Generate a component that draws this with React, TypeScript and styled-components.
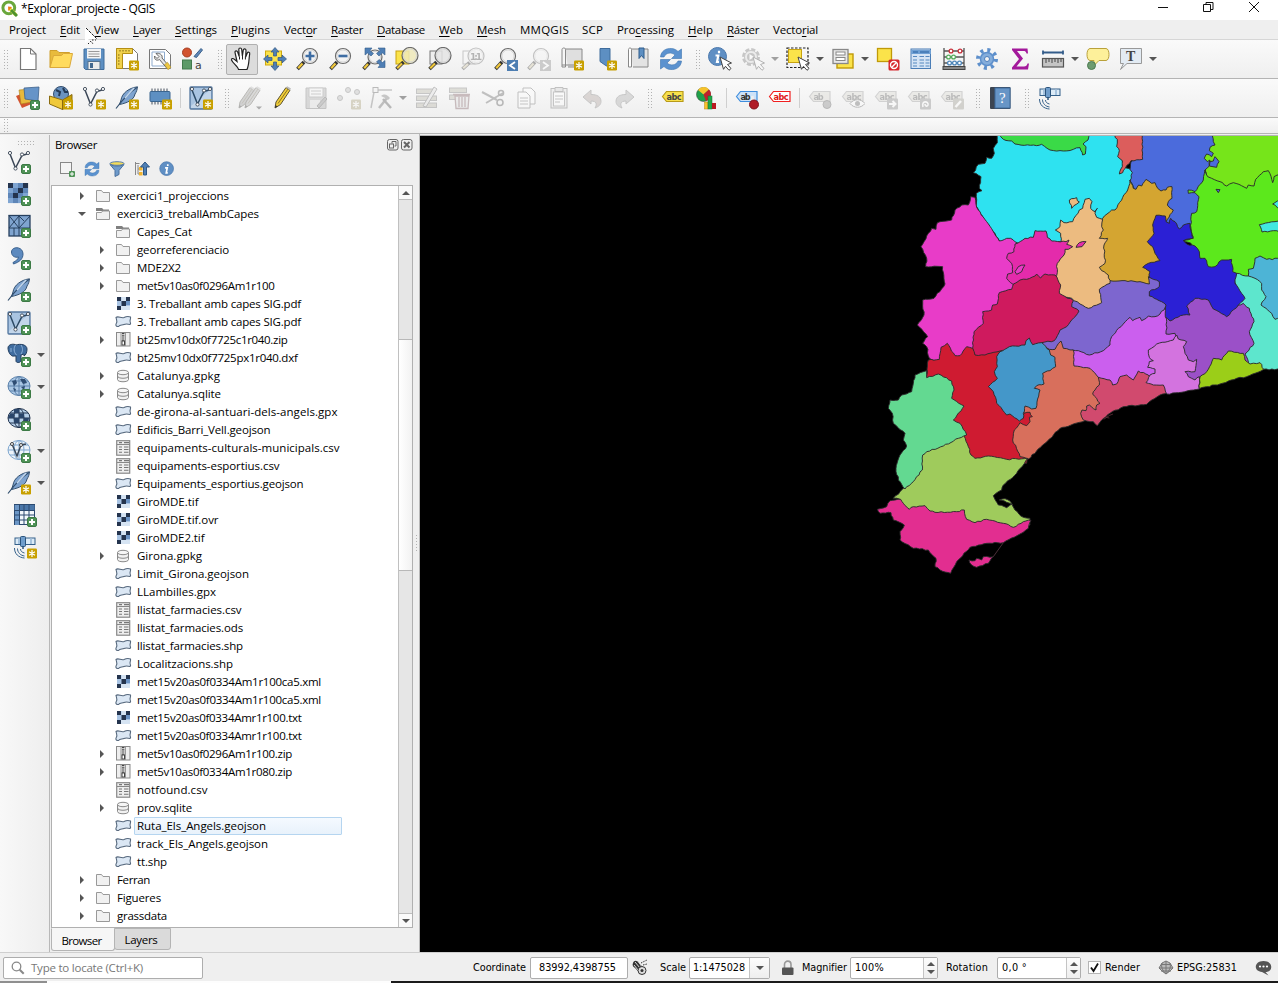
import React, { ReactNode, useLayoutEffect, useRef, useState } from "react";
import styled, { createGlobalStyle } from "styled-components";

const GlobalStyle = createGlobalStyle`
  * { box-sizing: border-box; }
  html, body { margin: 0; padding: 0; background: #efefef; overflow: hidden; }
  body { font-family: "Open Sans", "Noto Sans", sans-serif; font-size: 11.5px; color: #000; }
  svg { display: block; flex: none; }
`;

/* ---------- text with a known advance width ---------- */

const FitSpan = styled.span`
  display: inline-block;
  white-space: pre;
  flex: none;
`;

function Fit({ w, children }: { w: number; children: ReactNode }) {
  const ref = useRef<HTMLSpanElement>(null);
  const [spacing, setSpacing] = useState(0);
  useLayoutEffect(() => {
    const el = ref.current;
    if (!el) return;
    const n = (el.textContent || "").length || 1;
    setSpacing((s) => s + (w - el.getBoundingClientRect().width) / n);
  }, [w]);
  return (
    <FitSpan ref={ref} style={{ letterSpacing: spacing }}>
      {children}
    </FitSpan>
  );
}

/* ---------- frame ---------- */

const Window = styled.div`
  width: 1278px;
  height: 983px;
  display: flex;
  flex-direction: column;
  background: #efefef;
  overflow: hidden;
  position: relative;
`;

const TitleBar = styled.div`
  height: 20px;
  flex: none;
  background: #fff;
  display: flex;
  align-items: center;
  padding-bottom: 3px;
`;

const TitleText = styled.div`
  margin-left: 3px;
  flex: 1;
  font-size: 12px;
`;

const MenuBar = styled.div`
  height: 20px;
  flex: none;
  display: flex;
  align-items: center;
  padding-left: 9px;
  background: #efefef;
  border-bottom: 1px solid #d6d6d6;
`;

const MenuItem = styled.div<{ $w: number }>`
  width: ${(p) => p.$w}px;
  flex: none;
  line-height: 18px;
`;

const Mnemonic = styled.span`
  text-decoration: underline;
  text-underline-offset: 2px;
`;

const ToolBar = styled.div<{ $h: number }>`
  height: ${(p) => p.$h}px;
  flex: none;
  display: flex;
  align-items: center;
  background: linear-gradient(#fafafa, #efefef);
  border-bottom: 1px solid #b4b4b4;
  padding-left: 3px;
`;

const Slot = styled.div<{ $w?: number; $off?: boolean }>`
  width: ${(p) => p.$w ?? 33}px;
  height: 100%;
  flex: none;
  display: flex;
  align-items: center;
  justify-content: center;
  opacity: ${(p) => (p.$off ? 0.37 : 1)};
  filter: ${(p) => (p.$off ? "grayscale(.75)" : "none")};
`;

const DropSlot = styled.div`
  width: 12px;
  flex: none;
  display: flex;
  justify-content: flex-start;
  padding-left: 1px;
`;

const Pressed = styled.div`
  width: 32px;
  height: 31px;
  border: 1px solid #b0b0b0;
  border-radius: 2px;
  background: #dcdcdc;
  display: flex;
  align-items: center;
  justify-content: center;
`;

const HandleBox = styled.div<{ $w: number; $pad: number }>`
  width: ${(p) => p.$w}px;
  padding-right: ${(p) => p.$pad}px;
  flex: none;
  display: flex;
  justify-content: flex-end;
`;

const Rule = styled.div<{ $w: number }>`
  width: ${(p) => p.$w}px;
  height: 20px;
  flex: none;
  background: linear-gradient(#cfcfcf, #cfcfcf) center / 1px 100% no-repeat;
`;

const Dots = styled.div<{ $w: number; $h: number }>`
  width: ${(p) => p.$w}px;
  height: ${(p) => p.$h}px;
  flex: none;
  background-image: linear-gradient(90deg, #f3f3f3 0 0), linear-gradient(#f3f3f3 0 0), linear-gradient(#b0b0b0 0 0);
  background-size: 3px 100%, 100% 3px, 100% 100%;
  background: conic-gradient(from 270deg at 1px 1px, #b2b2b2 90deg, transparent 0) 0 0 / 3px 3px;
`;

const Handle = ({ w = 16, pad = 4, h = 19 }: { w?: number; pad?: number; h?: number }) => (
  <HandleBox $w={w} $pad={pad}>
    <Dots $w={4} $h={h} />
  </HandleBox>
);

const Arrow = styled.i<{ $off?: boolean }>`
  display: block;
  border: 4px solid transparent;
  border-top-color: ${(p) => (p.$off ? "#a0a0a0" : "#555")};
  border-bottom: 0;
`;

const Body = styled.div`
  flex: 1;
  min-height: 0;
  display: flex;
`;

const SideBar = styled.div`
  width: 50px;
  flex: none;
  border-right: 1px solid #b8b8b8;
  background: linear-gradient(90deg, #f8f8f8, #eeeeee);
  display: flex;
  flex-direction: column;
  padding-top: 6px;
  margin-top: 1px;
`;

const SideHandle = styled.div`
  padding-left: 18px;
  height: 5px;
`;

const SideRow = styled.div<{ $x: number }>`
  height: 32.1px;
  flex: none;
  padding-left: ${(p) => p.$x}px;
  display: flex;
  align-items: center;
`;

const SideArrow = styled(Arrow)`
  margin-left: 6px;
`;

const Dock = styled.div`
  width: 364px;
  flex: none;
  display: flex;
  flex-direction: column;
  padding-left: 1px;
`;

const DockTitle = styled.div`
  height: 21px;
  flex: none;
  display: flex;
  align-items: center;
  justify-content: space-between;
  padding: 0 1px 0 4px;
`;

const DockButtons = styled.div`
  display: flex;
  gap: 2px;
`;

const DockTools = styled.div`
  height: 30px;
  flex: none;
  display: flex;
  align-items: center;
  gap: 9px;
  padding: 0 0 2px 8px;
`;

const TreeBox = styled.div`
  height: 743px;
  width: 362px;
  flex: none;
  display: flex;
  background: #fff;
  border: 1px solid #b0b0b0;
`;

const Tree = styled.div`
  flex: 1;
  padding-top: 1px;
  overflow: hidden;
`;

const TreeRow = styled.div<{ $depth: number }>`
  height: 18px;
  display: flex;
  align-items: center;
  padding-left: ${(p) => 24 + p.$depth * 20}px;
`;

const Expander = styled.div`
  width: 12px;
  flex: none;
  display: flex;
  justify-content: center;
`;

const TreeIcon = styled.div`
  width: 18px;
  margin-left: 6px;
  flex: none;
  display: flex;
  justify-content: center;
  padding-bottom: 1px;
`;

const TreeLabel = styled.div<{ $sel?: boolean }>`
  height: 18px;
  line-height: ${(p) => (p.$sel ? 15 : 17)}px;
  margin-left: 2px;
  padding-left: ${(p) => (p.$sel ? 2 : 3)}px;
  width: ${(p) => (p.$sel ? "208px" : "auto")};
  border: ${(p) => (p.$sel ? "1px solid #b5d5f0" : "0")};
  border-radius: 1px;
  background: ${(p) => (p.$sel ? "linear-gradient(#f5faff, #e8f2fb)" : "none")};
`;

const ScrollBar = styled.div`
  width: 14px;
  flex: none;
  display: flex;
  flex-direction: column;
  border-left: 1px solid #c0c0c0;
  background: #e6e6e6;
`;

const ScrollButton = styled.div`
  height: 13px;
  flex: none;
  background: #fafafa;
  display: flex;
  align-items: center;
  justify-content: center;
`;

const Trough = styled.div<{ $h: number; $end?: boolean }>`
  height: ${(p) => p.$h}px;
  flex: none;
  border-top: ${(p) => (p.$end ? "0" : "1px solid #bdbdbd")};
  border-bottom: ${(p) => (p.$end ? "1px solid #bdbdbd" : "0")};
`;

const Thumb = styled.div`
  height: 232px;
  flex: none;
  border-top: 1px solid #b8b8b8;
  border-bottom: 1px solid #b8b8b8;
  background: linear-gradient(90deg, #fff, #f2f2f2);
`;

const Tabs = styled.div`
  display: flex;
  align-items: flex-start;
  height: 23px;
  flex: none;
`;

const Tab = styled.div<{ $w: number; $on?: boolean }>`
  width: ${(p) => p.$w}px;
  height: ${(p) => (p.$on ? 23 : 22)}px;
  padding-top: ${(p) => (p.$on ? 2 : 1)}px;
  padding-right: 3px;
  border: 1px solid #b4b4b4;
  border-top-color: ${(p) => (p.$on ? "transparent" : "#b4b4b4")};
  border-radius: 0 0 3px 3px;
  margin-left: ${(p) => (p.$on ? 0 : -1)}px;
  background: ${(p) => (p.$on ? "#f6f6f6" : "#dadada")};
  display: flex;
  align-items: center;
  justify-content: center;
`;

const Splitter = styled.div`
  width: 6px;
  flex: none;
  display: flex;
  align-items: center;
  border-right: 1px solid #b8b8b8;
  justify-content: center;
`;

const MapPane = styled.div`
  flex: 1;
  background: #000;
  border-top: 1px solid #b4b4b4;
  margin-top: 1px;
`;

const StatusBar = styled.div`
  height: 29px;
  flex: none;
  display: flex;
  align-items: center;
  padding: 1px 0 0 3px;
  border-top: 1px solid #cfcfcf;
  font-family: "DejaVu Sans Condensed", "DejaVu Sans", "Open Sans", sans-serif;
  font-size: 10.8px;
`;

const Field = styled.div<{ $w: number; $pl?: number }>`
  width: ${(p) => p.$w}px;
  height: 22px;
  flex: none;
  display: flex;
  align-items: center;
  padding-left: ${(p) => p.$pl ?? 4}px;
  border: 1px solid #adadad;
  border-radius: 2px;
  background: #fff;
`;

const FieldButton = styled.div<{ $w: number }>`
  width: ${(p) => p.$w}px;
  height: 20px;
  margin-left: auto;
  border-left: 1px solid #c4c4c4;
  background: linear-gradient(#fdfdfd, #eee);
  display: flex;
  flex-direction: column;
  align-items: center;
  justify-content: center;
  gap: 4px;
`;

const UpArrow = styled.i`
  display: block;
  border: 4px solid transparent;
  border-bottom-color: #555;
  border-top: 0;
`;

const Hint = styled.span`
  color: #777;
  font-family: "Open Sans", sans-serif;
  font-size: 11.5px;
  margin-left: 6px;
`;

const Gap = styled.div<{ $w: number }>`
  width: ${(p) => p.$w}px;
  flex: none;
`;

const Check = styled.div`
  width: 13px;
  height: 13px;
  background: #fff;
  border: 1px solid #b5b5b5;
  flex: none;
`;

const Taskbar = styled.div`
  height: 2px;
  flex: none;
  background: linear-gradient(90deg, #8f8f8f 47px, #fdfdfd 47px, #fdfdfd 391px, #1b1b1b 391px);
`;

const Pointer = styled.div`
  position: absolute;
  left: 84px;
  top: 27px;
`;

/* ---------- icons ---------- */

const Svg = ({ s = 24, children, box = 24 }: { s?: number; box?: number; children: ReactNode }) => (
  <svg width={s} height={s} viewBox={`0 0 ${box} ${box}`} fill="none">
    {children}
  </svg>
);

const PlusBadge = () => (
  <g>
    <rect x="14.500" y="14.500" width="9" height="9" rx="1.500" fill="#4f9357" stroke="#3c7a45" />
    <path d="M19 16v6M16 19h6" stroke="#fff" strokeWidth="2" />
  </g>
);

const StarBadge = () => (
  <g>
    <rect x="14" y="13.500" width="10" height="10" rx="1.200" fill="#c8a000" />
    <path d="M19 15v7M16 16.700l6 3.600M22 16.700l-6 3.600" stroke="#fff" strokeWidth="1.200" />
  </g>
);

const Lens = ({ cx = 14, cy = 9, r = 7.5, fill = "#f2f2f2" }: { cx?: number; cy?: number; r?: number; fill?: string }) => (
  <g>
    <path d={`M${cx - r + 1.5} ${cy + r - 1.5}L1.5 22`} stroke="#333" strokeWidth="3.600" />
    <path d={`M${cx - r} ${cy + r}L2.2 21.3`} stroke="#f0c83c" strokeWidth="2.200" />
    <circle cx={cx} cy={cy} r={r} fill={fill} fillOpacity=".85" stroke="#6b6b6b" strokeWidth="1.200" />
    <circle cx={cx} cy={cy} r={r - 1.4} stroke="#d5d5d5" strokeWidth="1" />
  </g>
);

const VLine = ({ light }: { light?: boolean }) => (
  <g>
    <path d="M3 4l5.500 14L15 5.500 20 4" stroke={light ? "#2c4a66" : "#3b4757"} strokeWidth="1.500" />
    {[[3, 3], [15, 4.500], [21, 3], [8.500, 18.500]].map(([x, y]) => (
      <circle key={`${x}`} cx={x} cy={y} r="1.600" fill="#fff" stroke="#4a5563" />
    ))}
  </g>
);

const Feather = () => (
  <g>
    <path d="M22.500 .8C14 2 7 7 6 14l-1.500 4.500C12 17 19 14 20 8c1.500-2 2.300-5 2.500-7.200z" fill="#7ea3cf" stroke="#33506f" />
    <path d="M22 1.500C15 6 8 13 1 22.500" stroke="#33506f" strokeWidth="1.200" />
    <path d="M19 2l-9 10" stroke="#c4d8ee" strokeWidth="1.500" />
  </g>
);

const Refresh = () => (
  <g fill="#5b92cf" stroke="#3d73ae" strokeWidth=".6">
    <path d="M1.500 10C2 4 7 1 12.500 1.500c3 .2 5 1.500 6.500 3L22.500 2v9.500h-10l3.500-3.500C12.500 5 7 5.500 5 10z" />
    <path d="M22.500 14C22 20 17 23 11.500 22.500c-3-.2-5-1.500-6.500-3L1.500 22v-9.500h10L8 16c3.500 3 9 2.500 11-2z" />
  </g>
);

const Info = () => (
  <g>
    <circle cx="10" cy="10" r="9" fill="#5f8fc4" stroke="#4a78ad" />
    <path d="M11.500 4.200v2.500M8 9h2.800l-1.300 6.500h2" stroke="#fff" strokeWidth="2.200" />
  </g>
);

const CursorArrow = () => <path d="M12 10l11.500 6-4 1.500 3.500 4-2 1.800-3.500-4-2 3z" fill="#fff" stroke="#444" />;

const Tag = ({ fill, line, ink, t = "abc" }: { fill: string; line: string; ink: string; t?: string }) => (
  <g>
    <path d="M1.500 10.500l4-5h16.500v10H5.500z" fill={fill} stroke={line} strokeWidth="1.200" />
    <text x="5.500" y="13.500" fontSize="8.200" fontWeight="bold" fontFamily="DejaVu Sans, sans-serif" fill={ink} textLength={t.length * 5}>
      {t}
    </text>
  </g>
);

const Globe = ({ fill = "#c9dcf0", ink = "#5c82ab" }: { fill?: string; ink?: string }) => (
  <g stroke={ink}>
    <ellipse cx="12" cy="11" rx="11" ry="9.500" fill={fill} />
    <ellipse cx="12" cy="11" rx="5" ry="9.500" />
    <path d="M1 11h22M12 1.500v19M3 6h18M3 16h18" />
  </g>
);

const Satellite = () => (
  <g>
    <rect x="2" y="3" width="20" height="6.500" fill="#dcebf7" stroke="#34608a" />
    <path d="M6 3.500v5.500M18 3.500v5.500" stroke="#a6c3de" strokeWidth="2" />
    <rect x="7.500" y="1.500" width="5" height="10" rx="1" fill="#6f9dcb" stroke="#2c547c" />
    <path d="M10 11.500v2.500" stroke="#2c547c" strokeWidth="1.500" />
    <path d="M7.500 14c0 2 1.500 3.500 4 4M4.500 13.500c0 4 3 7 7 7.500M1.500 13c0 6 4 9.500 10 10" stroke="#34608a" />
  </g>
);

const Pencil = ({ fill = "#f2cf3a" }: { fill?: string }) => (
  <g>
    <path d="M5 16L15 1.500l4 2.700L9.500 18.500 4 22z" fill={fill} stroke="#5c5230" />
    <path d="M7 17.500L17 3" stroke="#8a7422" />
    <path d="M15 1.500l4 2.700 1-1.700-3.800-2.200z" fill="#bbb" />
    <path d="M4 22l.5-3 2 1.500z" fill="#333" />
  </g>
);

const Checker = () => (
  <g>
    {["2132", "1323", "3231", "1311"].map((row, j) =>
      row.split("").map((c, i) => (
        <rect key={`${i}-${j}`} x={1 + i * 5} y={1 + j * 5} width="5.100" height="5.100" fill={["", "#7fa5d2", "#24344e", "#5e86b8"][+c]} />
      ))
    )}
  </g>
);

const VBox = () => (
  <g>
    <rect x="1" y="1" width="22" height="22" rx="1" fill="#a9c4e1" stroke="#54779f" strokeWidth="1.300" />
    <path d="M2 20L22 3v19H2z" fill="#c3d6ea" />
    <VLine light />
  </g>
);

const Hand = (
  <Svg>
    <path d="M8.500 22.500c-.5-3-5.500-6-7-9.500-.4-1.600 1.500-2 2.800-.8L7 14.500 5 5.500c-.3-2 2-2.300 2.600-.6l1.600 4.600-.4-7c0-2 2.600-2 2.900 0l.7 6.500.9-6c.3-1.800 2.800-1.500 2.700.4l-.3 6.600 1.600-4c.7-1.500 2.700-.8 2.400.8-1 5-.3 10.500-2.700 15.700z" fill="#fff" stroke="#222" strokeWidth="1.200" />
    <path d="M9.500 9.500v3M12.500 9v3.500M15.400 9.500V12.500" stroke="#222" />
  </Svg>
);

const icons: Record<string, ReactNode> = {
  neu: <Svg><path d="M4.500 1.500h10l5.500 5.500v15.500h-15.500z" fill="#fff" stroke="#777" strokeWidth="1.200" /><path d="M14.500 1.500v5.500h5.500" stroke="#777" /></Svg>,
  open: <Svg><path d="M1 20.500V3.500h7l2 2h10.500v4" fill="#e8bb3c" stroke="#cf9f2b" /><path d="M1 20.500L4.500 8.500h8l2-2h9L20.500 20.500z" fill="#ffdb5e" stroke="#dba93a" /></Svg>,
  save: <Svg><path d="M2 2h20v20.500H3.500L2 21z" fill="#5d8fc2" stroke="#3f6c9c" /><path d="M5 2h14v9.500H5z" fill="#f4f4f4" /><path d="M6.500 4.500h11M6.500 7h11M6.500 9.500h11" stroke="#9a9a9a" /><rect x="6" y="14.500" width="12" height="8" fill="#ececec" stroke="#55728f" /><rect x="8" y="16" width="3" height="5" fill="#44698f" /></Svg>,
  layout: <Svg><path d="M1.500 1.500h16l5 5v15h-21z" fill="#fff" stroke="#777" /><path d="M1.500 1.500h16v5h-10v15h-6z" fill="#f0d14c" stroke="#b58f14" /><path d="M5 3v1.500M8 3v1.500M11 3v1.500M14 3v1.500M3 8h1.500M3 11h1.500M3 14h1.500M3 17h1.500" stroke="#7c6512" /><StarBadge /></Svg>,
  manager: <Svg><path d="M1.500 2.500h16l5 5v14h-21z" fill="#fff" stroke="#777" /><path d="M4 5h12.500v14H4z" stroke="#8eabce" /><path d="M8 6.500l3 3-2 2-2.500-2.500C6 13 9 14 11.500 12.500L19 21.500l2.500-2-7.500-8.500C15 8 11.500 5.500 8 6.500z" fill="#e6e6e6" stroke="#666" /><path d="M16.500 17.500l3-2.200 3.500 5-3 2.500z" fill="#edc742" stroke="#a98a2a" strokeWidth=".5" /></Svg>,
  style: <Svg><circle cx="6" cy="5.500" r="4.500" fill="#d2532f" stroke="#a63e22" /><path d="M13 9.500L20 1.500l1.500 1.500-6 7.500z" fill="#5d87b8" stroke="#3d628c" /><rect x="1.500" y="13" width="9" height="9" fill="#5d9a68" stroke="#437a4d" /><text x="14" y="21.500" fontSize="11" fontFamily="DejaVu Sans, sans-serif" fill="#444">a</text></Svg>,
  pan: <Svg><rect x="2.500" y="4" width="16" height="14" fill="#fbe34a" stroke="#cfa90e" /><g fill="#4f7fb5" stroke="#33587f" strokeWidth=".7"><path d="M12 .5l4 4.500h-2.500v4h-3V5H8zM12 23.500l4-4.500h-2.500v-4h-3v4H8zM.5 12L5 8v2.500h4v3H5V16zM23.500 12L19 8v2.500h-4v3h4V16z" /></g></Svg>,
  zin: <Svg><Lens /><path d="M14 4.500v9M9.500 9h9" stroke="#3e6da3" strokeWidth="2.600" /></Svg>,
  zout: <Svg><Lens /><path d="M9.500 9h9" stroke="#3e6da3" strokeWidth="2.600" /></Svg>,
  zfull: <Svg><Lens cx={13} cy={10} r={7} /><g fill="#4f7fb5" stroke="#365e8a" strokeWidth=".6"><path d="M3 1h7L8 3.500l3.500 3-2.500 2.500-3.500-3L3 8zM23 1h-7l2 2.500-3.500 3L17 9l3.500-3L23 8zM23 20.500h-7l2-2.500-3.500-3 2.500-2.500 3.500 3 2.500-2z" /></g></Svg>,
  zsel: <Svg><rect x="1" y="4" width="13" height="13" fill="#fbe34a" stroke="#c9a40f" /><Lens fill="#efe9b8" cx={15} cy={8.500} r={8} /></Svg>,
  zlay: <Svg><rect x="2" y="4" width="12" height="13" fill="#eee" stroke="#777" /><Lens fill="#e4e4e4" cx={15} cy={8.500} r={8} /></Svg>,
  znat: <Svg><rect x="2" y="4" width="12" height="13" stroke="#777" /><Lens cx={15} cy={9} r={8} /><text x="9" y="12.500" fontSize="9" fontWeight="bold" fontFamily="DejaVu Sans, sans-serif" textLength="12" fill="#444">1:1</text></Svg>,
  zlast: <Svg><Lens /><rect x="13" y="13" width="11" height="11" fill="#4d7eb2" /><path d="M21 15l-5 3.500 5 3.500" stroke="#fff" strokeWidth="1.800" /></Svg>,
  znext: <Svg><Lens /><rect x="13" y="13" width="11" height="11" fill="#888" /><path d="M16 15l5 3.500-5 3.500" stroke="#fff" strokeWidth="1.800" /></Svg>,
  map3: <Svg><path d="M5 2h17v18H8" fill="#dfdfdf" stroke="#888" /><path d="M2 2.500c0-2 3.500-2 3.500 0V20H2zM2 18h15" fill="#f6f6f6" stroke="#888" /><StarBadge /></Svg>,
  bmNew: <Svg><path d="M7 1.500h10V21l-5-3-5-3.500z" fill="#5d8fc2" stroke="#3f6c9c" /><StarBadge /></Svg>,
  bm: <Svg><path d="M4 2h18v18H7" fill="#e3e3e3" stroke="#888" /><path d="M2.500 2.500c0-2 3-2 3 0V20h-3z" fill="#fff" stroke="#888" /><path d="M13 1h5v10.500l-2.500-3-2.500 3z" fill="#5d8fc2" stroke="#2f5c8c" /></Svg>,
  refresh: <Svg><Refresh /></Svg>,
  identify: <Svg><g transform="translate(-.5 -.5)"><Info /></g><CursorArrow /></Svg>,
  action: <Svg><circle cx="10" cy="10" r="7.500" stroke="#777" strokeWidth="3" strokeDasharray="4 1.890" /><circle cx="10" cy="10" r="6.500" fill="#ddd" stroke="#777" /><circle cx="10" cy="10" r="4" fill="#777" /><path d="M8.500 7l4.500 3-4.500 3z" fill="#fff" /><CursorArrow /></Svg>,
  select: <Svg><rect x="1" y="1" width="21" height="19.500" stroke="#222" strokeDasharray="2.500 1.500" strokeWidth="1.200" /><rect x="2.500" y="2.500" width="13" height="13" fill="#fbe34a" stroke="#c9a40f" /><CursorArrow /></Svg>,
  form: <Svg><rect x="6" y="7" width="16" height="14" fill="#fbe34a" stroke="#c09a08" strokeWidth="1.400" /><rect x="2" y="2.500" width="15" height="14" fill="#e8e8e8" stroke="#888" strokeWidth="1.300" /><rect x="5" y="5" width="9" height="3" fill="#fff" stroke="#888" /><rect x="5" y="10.500" width="9" height="3" fill="#fff" stroke="#888" /></Svg>,
  desel: <Svg><rect x="1.500" y="1.500" width="14" height="13" fill="#fbe34a" stroke="#c09a08" strokeWidth="1.300" /><rect x="12.500" y="12.500" width="11" height="11" rx="1.500" fill="#d6262c" /><circle cx="18" cy="18" r="3.500" stroke="#fff" strokeWidth="1.400" /><path d="M15.500 20.500l5-5" stroke="#fff" strokeWidth="1.400" /></Svg>,
  table: <Svg><rect x="2" y="2" width="19.500" height="19.500" fill="#d5e4f5" stroke="#4a7db6" /><path d="M2 5h20" stroke="#6fa0d4" strokeWidth="4" /><path d="M4 5h5M11 5h9" stroke="#3f76b2" strokeWidth="1.500" /><path d="M4 9.500h4M10.500 9.500h4.500M16.500 9.500h4M4 13h4M10.500 13h4.500M16.500 13h4M4 16h4M10.500 16h4.500M16.500 16h4M4 19h4M10.500 19h4.500M16.500 19h4" stroke="#5588c0" strokeWidth="1.200" /></Svg>,
  abacus: <Svg><path d="M2 1v19M22 1v19M2 4h20M2 10h20M2 16h20" stroke="#555" strokeWidth="1.300" /><rect x="1" y="19.500" width="22" height="3" fill="#888" stroke="#444" /><g fill="#fff" strokeWidth="1.300"><g stroke="#c8323c"><circle cx="9" cy="4" r="1.900" /><circle cx="18" cy="4" r="1.900" /></g><g stroke="#54ab5c"><circle cx="6.500" cy="10" r="1.900" /><circle cx="11.500" cy="10" r="1.900" /></g><g stroke="#4d86ba"><circle cx="7.500" cy="16" r="1.900" /><circle cx="12.500" cy="16" r="1.900" /><circle cx="17.500" cy="16" r="1.900" /></g></g></Svg>,
  gear: <Svg><circle cx="12" cy="12" r="9" stroke="#5d8fcb" strokeWidth="4" strokeDasharray="3 4.070" /><circle cx="12" cy="12" r="6.500" fill="#84addb" stroke="#5d8fcb" strokeWidth="1.500" /><circle cx="12" cy="12" r="2.500" fill="#f3f3f3" stroke="#4d7fbd" /></Svg>,
  sigma: <Svg><path d="M4 1.500h15.500l.5 5h-1.500c-.5-2-1.500-2.500-3-2.500H9l6 7.500-6.500 8H16c2 0 3-1 3.500-3H21l-1 6H4v-2l7-8.500L4 3z" fill="#a3199b" /></Svg>,
  ruler: <Svg><path d="M2 5.500h20M2 3.500v4M22 3.500v4" stroke="#335c8a" strokeWidth="1.800" /><rect x="1.500" y="11.500" width="21" height="8.500" fill="#c4c4c4" stroke="#555" strokeWidth="1.200" /><path d="M5 12v4M8 12v3M11 12v4M14 12v3M17 12v4M20 12v3" stroke="#444" /></Svg>,
  tip: <Svg><path d="M4 1.500h16c4 0 4 12 0 12h-7l-6 6 1-6H4C0 13.500 0 1.500 4 1.500z" fill="#fdf09a" stroke="#b9a13a" /><circle cx="5.500" cy="18.500" r="4" fill="#6d9b70" stroke="#4b7a50" /></Svg>,
  text: <Svg><path d="M1.500 1.500h21v15H8l-6.500 6 3-6h-3z" fill="#e3ebf3" stroke="#999" /><text x="7" y="13.500" fontSize="14" fontFamily="Liberation Serif, serif" fontWeight="bold" fill="#444">T</text></Svg>,
  layers: <Svg><path d="M0 10L10 6l8 11-12 5z" fill="#d2532f" /><path d="M3 4l11-1 2 13-11 2z" fill="#e9b93b" stroke="#a98120" strokeWidth=".6" /><path d="M8 2l15-1-1 14-13-2z" fill="#6694c8" stroke="#3d628c" strokeWidth=".8" /><PlusBadge /></Svg>,
  gpkg: <Svg><circle cx="12" cy="8" r="7.500" fill="#6a93c1" stroke="#334d6e" /><path d="M7 4l4 2-1 4M14 2l2 4 3 0" stroke="#243b59" strokeWidth="2" /><path d="M.5 10l13 4v9.500L.5 18z" fill="#f0c93a" stroke="#8b6c10" /><path d="M13.500 14L23 8.500V18l-9.500 5.500z" fill="#c8a000" stroke="#8b6c10" /><StarBadge /></Svg>,
  vnew: <Svg><VLine /><StarBadge /></Svg>,
  fnew: <Svg><Feather /><StarBadge /></Svg>,
  chip: <Svg><path d="M4 2.500v16M7 2.500v16M10 2.500v16M13 2.500v16M16 2.500v16M19 2.500v16" stroke="#444f5c" /><rect x="2" y="5.500" width="20" height="10" rx="1" fill="#5d8fc2" stroke="#3b658f" /><StarBadge /></Svg>,
  vbox: <Svg><VBox /><StarBadge /></Svg>,
  pencils: <Svg><g transform="translate(-3 0)"><Pencil fill="#999" /></g><g transform="translate(3 0)"><Pencil fill="#aaa" /></g><path d="M18 20.500h6l-3 3z" fill="#333" /></Svg>,
  pencil: <Svg><Pencil /></Svg>,
  savee: <Svg><path d="M2 2h20v20.500H2z" fill="#aaa" stroke="#777" /><path d="M5 2h14v9H5z" fill="#f4f4f4" stroke="#888" /><path d="M7 5h10M7 8h10" stroke="#888" /><rect x="6" y="14" width="10" height="8" fill="#ddd" /><path d="M13 20l8-9 2 2-8 9z" fill="#888" stroke="#555" /></Svg>,
  points: <Svg><g fill="#bbb" stroke="#777"><circle cx="3" cy="12" r="2.500" /><circle cx="11" cy="4" r="2.500" /><circle cx="20" cy="6" r="2.500" /></g><StarBadge /></Svg>,
  vertex: <Svg><path d="M5 4h17M4 6L1 22" stroke="#777" strokeWidth="1.500" /><rect x="3" y="1.500" width="5" height="5" fill="#eee" stroke="#555" /><path d="M9 22l8-10" stroke="#666" strokeWidth="2.500" /><path d="M11 10c4-3 6-1 9 2l-2 2-3-2z" fill="#777" /><path d="M13 13l8 9" stroke="#555" strokeWidth="2.500" /></Svg>,
  multi: <Svg><g fill="#bdb67a" stroke="#777"><rect x="1.500" y="3" width="18" height="4.500" /><rect x="1.500" y="10" width="20" height="4.500" /><rect x="1.500" y="17" width="20" height="4.500" /></g><path d="M8 20L19 1l3 2-11 18z" fill="#ddd" stroke="#666" /></Svg>,
  trash: <Svg><g fill="#bdb67a" stroke="#777"><rect x="1.500" y="2" width="17" height="4.500" /><rect x="1.500" y="9" width="6" height="4.500" /></g><path d="M5 8.500h17M7 10h14l-1 12.500H8zM11 11v10M14 11v10M17 11v10" fill="#ddd" stroke="#c45" strokeWidth="1.300" /></Svg>,
  cut: <Svg><path d="M1 6l15 8M5 17L22 7" stroke="#666" strokeWidth="2" /><circle cx="19" cy="16.500" r="3" stroke="#555" strokeWidth="1.600" /><circle cx="20" cy="7" r="2.500" stroke="#555" strokeWidth="1.600" /></Svg>,
  copy: <Svg><path d="M9 2h8l4 4v12H9z" fill="#fff" stroke="#666" /><path d="M4 6h8l4 4v12H4z" fill="#fff" stroke="#666" /><path d="M6 12h8M6 15h8M6 18h8" stroke="#777" /></Svg>,
  paste: <Svg><rect x="4" y="2.500" width="16" height="19.500" fill="#e2e2e2" stroke="#666" /><rect x="6.500" y="6" width="11" height="14" fill="#fff" stroke="#777" /><path d="M8 1.500h8v4H8z" fill="#ccc" stroke="#666" /><path d="M8 10h8M8 13h8M8 16h5" stroke="#777" /></Svg>,
  undo: <Svg><path d="M3 11l8-7v4.500c6 0 10 2 10 7 0 3-2 5-6 6.500 2-3.500 2-7-4-7V18z" fill="#c98" stroke="#777" /></Svg>,
  redo: <Svg><path d="M21 11l-8-7v4.500c-6 0-10 2-10 7 0 3 2 5 6 6.500-2-3.500-2-7 4-7V18z" fill="#aaa" stroke="#777" /></Svg>,
  abcY: <Svg><Tag fill="#f8e04c" line="#b89a18" ink="#444" /></Svg>,
  diagram: <Svg><circle cx="9.500" cy="8.500" r="7" fill="#1fa04a" stroke="#333" strokeWidth=".5" /><path d="M9.500 8.500L4 4a7 7 0 0 1 11-.5z" fill="#f6c22c" /><path d="M9.500 8.500L15 3.500a7 7 0 0 1-3 11.500z" fill="#c0202c" /><rect x="10.500" y="16" width="3.500" height="7" fill="#f6c22c" stroke="#b88a10" strokeWidth=".5" /><rect x="14" y="10" width="4" height="13" fill="#1fa84a" stroke="#176b33" strokeWidth=".5" /><rect x="18" y="17" width="4" height="6" fill="#b81820" /></Svg>,
  abPin: <Svg><Tag fill="#cde2f8" line="#3f8ede" ink="#333" t="ab" /><path d="M18 16l-1-6" stroke="#eee" strokeWidth="3" /><circle cx="19" cy="18.500" r="4.500" fill="#b01c28" stroke="#80141c" /></Svg>,
  abcR: <Svg><Tag fill="#fff" line="#f02020" ink="#e01818" /></Svg>,
  lPin: <Svg><Tag fill="#ddd7b8" line="#999" ink="#555" t="ab" /><circle cx="19" cy="18.500" r="4" fill="#888" stroke="#555" /></Svg>,
  lEye: <Svg><Tag fill="#ddd7b8" line="#999" ink="#555" /><path d="M9 17.500c4-5 11-5 15 0-4 5-11 5-15 0z" fill="#fff" stroke="#555" /><circle cx="16.500" cy="17.500" r="2.500" fill="#666" /></Svg>,
  lMove: <Svg><Tag fill="#ddd7b8" line="#999" ink="#555" /><rect x="13" y="12.500" width="11" height="11" rx="1" fill="#888" /><path d="M15 18h6M18.500 15l3 3-3 3" stroke="#fff" strokeWidth="2" /></Svg>,
  lRot: <Svg><Tag fill="#ddd7b8" line="#999" ink="#555" /><rect x="13" y="12.500" width="11" height="11" rx="1" fill="#888" /><path d="M16 21c-2-7 6-6 5-2-1 2-3 1-3-1" stroke="#fff" strokeWidth="1.600" /></Svg>,
  lEdit: <Svg><Tag fill="#ddd7b8" line="#999" ink="#555" /><rect x="13" y="12.500" width="11" height="11" rx="1" fill="#a19b6c" /><path d="M15.500 21l5.500-6" stroke="#fff" strokeWidth="2.500" /></Svg>,
  help: <Svg><rect x="1" y="1" width="20.500" height="22" rx="1" fill="#3c4552" /><rect x="6" y="2" width="15" height="20" fill="#6795c6" stroke="#3d6a9c" /><text x="10" y="17" fontSize="15" fontFamily="Liberation Serif, serif" fill="#fff">?</text></Svg>,
  sat: <Svg><Satellite /></Svg>,
};

const sideIcons: ReactNode[] = [
  <Svg><VLine /><PlusBadge /></Svg>,
  <Svg><Checker /><PlusBadge /></Svg>,
  <Svg><rect x="2" y="1.500" width="21" height="20.500" fill="#7fa4cf" stroke="#27405f" strokeWidth="1.300" /><path d="M2 14h21M12 1.500v20.500M2 1.500L12 14M2 14L12 2M12 14L23 2M12 2l5 5M7 14v8" stroke="#27405f" /><PlusBadge /></Svg>,
  <Svg><path d="M4.500 6c0-6 11.500-6 11.500 2 0 5-3.500 8-9.500 10l-.5-1.500c3-1.500 5-3 5.500-5.500C8 12 4.500 10 4.500 6z" fill="#5d8abf" stroke="#3a618e" /><PlusBadge /></Svg>,
  <Svg><Feather /><PlusBadge /></Svg>,
  <Svg><VBox /><PlusBadge /></Svg>,
  <Svg><path d="M1 5c0-4 6-4.500 8-3 4-1.500 11-.5 11 4 0 3-1 6-3 7v-2l-3 1v6c-1 2-5 2-5 0v-5L7 13c-3 1-6-4-6-8z" fill="#3f6c9f" stroke="#243f5f" /><path d="M8.500 2c-2 3-2 7 1 10M14 2c2 3 2 6 0 9M4 5v4" stroke="#8fb3d9" /><PlusBadge /></Svg>,
  <Svg><Globe fill="#a9c6e4" /><path d="M5 6l4-1 1 3-3 3zM13 4h5l2 4-4 1zM14 12l4-1-1 4zM6 13l3 1-1 3z" fill="#2f4d73" /><PlusBadge /></Svg>,
  <Svg><Globe fill="#b7d0ea" ink="#22344e" /><path d="M3 6.500h4v4.500H1zM12 6.500h5v4.500h-5zM7 11h5v5H7zM17 11h5l-1 5h-4zM7 2h5v4H7z" fill="#2a456a" /><PlusBadge /></Svg>,
  <Svg><Globe fill="#eef4fa" ink="#7fa7cf" /><path d="M5 5l5 12 4-11 5-1" stroke="#39485a" strokeWidth="1.500" /><circle cx="5" cy="5" r="1.500" fill="#fff" stroke="#444" /><circle cx="14" cy="6" r="1.500" fill="#fff" stroke="#444" /><PlusBadge /></Svg>,
  <Svg><Feather /><StarBadge /></Svg>,
  <Svg><rect x="1.500" y="1.500" width="20" height="20" fill="#f3f8fc" stroke="#2c4a70" /><path d="M1.500 4.500h20" stroke="#4a76a8" strokeWidth="5" /><path d="M4 2v20" stroke="#6b96c6" strokeWidth="4" /><path d="M6.500 2v20M11 2v20M16 2v20M2 7.500h20M2 12h20M2 17h20" stroke="#2c4a70" /><PlusBadge /></Svg>,
  <Svg><Satellite /><StarBadge /></Svg>,
];

const treeIcons: Record<string, ReactNode> = {
  folder: <svg width="16" height="14"><path d="M1.500 12.500v-11h5l1.500 2h6.500v9z" fill="#f1f1f1" stroke="#999" /></svg>,
  fopen: <svg width="16" height="14"><path d="M1 4V1h6l1.500 1.500H14V4z" fill="#808080" /><path d="M1.500 12.500v-7h5l1-1.500h7v8.500z" fill="#f1f1f1" stroke="#999" /></svg>,
  raster: <svg width="13" height="13"><path d="M0 0h13v13H0z" fill="#a9c4e4" /><path d="M0 0h4v4H0zM9 0h4v4H9zM4.500 4h4.500v5H4.500zM0 9h4v4H0z" fill="#24344e" /><path d="M4.500 0H9v4H4.500zM4 9h5v4H4zM9 9h4v4H9z" fill="#d6e4f3" /><path d="M9 4h4v4H9z" fill="#6c94c6" /></svg>,
  vector: <svg width="17" height="14"><path d="M1 2.500C3 .5 6 3.500 9 2.500c2-1 4-1.500 6.500-.5.5 2-1 3-.3 5 .5 1 .5 2-.2 2.500-2-.5-4-1-6 0S5 9.500 3.500 11.500C.5 12 .5 9.500 1.500 8S1.500 5 1 2.500z" fill="#dbe7f4" stroke="#56687d" strokeWidth="1.100" /></svg>,
  zip: <svg width="15" height="15"><rect x=".5" y=".5" width="13.500" height="13.500" fill="#eee" stroke="#8a8a8a" /><path d="M5 1v13M9.500 1v13" stroke="#999" /><path d="M7.200 1v8" stroke="#444" strokeWidth="2.500" strokeDasharray="1.200 1" /><rect x="6" y="9" width="2.500" height="4" fill="#fff" stroke="#444" /></svg>,
  db: <svg width="14" height="14"><path d="M1.500 3.500v7c0 3 11 3 11 0v-7" fill="#f1f1f1" stroke="#8a8a8a" /><ellipse cx="7" cy="3.500" rx="5.500" ry="2.200" fill="#f6f6f6" stroke="#8a8a8a" /><path d="M1.500 7c0 3 11 3 11 0" fill="none" stroke="#8a8a8a" /></svg>,
  table: <svg width="15" height="16"><rect x=".7" y=".7" width="13" height="14.500" fill="#eee" stroke="#888" strokeWidth="1.200" /><path d="M1 4.500h13" stroke="#888" /><path d="M3 2.600h3M8 2.600h5M3 7h3M8 7h4.500M3 9.500h3M8 9.500h4.500M3 12.300h3M8 12.300h4.500" stroke="#777" strokeWidth="1.100" /></svg>,
};

/* ---------- tree data: icon, label, right edge, depth, expander ---------- */

type Row = { i: string; t: string; r: number; d?: number; e?: "c" | "o"; sel?: boolean };
const rows: Row[] = [
  { i: "folder", t: "exercici1_projeccions", r: 229, d: 0, e: "c" },
  { i: "fopen", t: "exercici3_treballAmbCapes", r: 259, d: 0, e: "o" },
  { i: "fopen", t: "Capes_Cat", r: 192 },
  { i: "folder", t: "georreferenciacio", r: 229, e: "c" },
  { i: "folder", t: "MDE2X2", r: 181, e: "c" },
  { i: "folder", t: "met5v10as0f0296Am1r100", r: 274.5, e: "c" },
  { i: "raster", t: "3. Treballant amb capes SIG.pdf", r: 301 },
  { i: "vector", t: "3. Treballant amb capes SIG.pdf", r: 301 },
  { i: "zip", t: "bt25mv10dx0f7725c1r040.zip", r: 287.5, e: "c" },
  { i: "vector", t: "bt25mv10dx0f7725px1r040.dxf", r: 297.5 },
  { i: "db", t: "Catalunya.gpkg", r: 220, e: "c" },
  { i: "db", t: "Catalunya.sqlite", r: 221, e: "c" },
  { i: "vector", t: "de-girona-al-santuari-dels-angels.gpx", r: 337.5 },
  { i: "vector", t: "Edificis_Barri_Vell.geojson", r: 270.5 },
  { i: "table", t: "equipaments-culturals-municipals.csv", r: 339.5 },
  { i: "table", t: "equipaments-esportius.csv", r: 279.5 },
  { i: "vector", t: "Equipaments_esportius.geojson", r: 303.5 },
  { i: "raster", t: "GiroMDE.tif", r: 198.5 },
  { i: "raster", t: "GiroMDE.tif.ovr", r: 218.5 },
  { i: "raster", t: "GiroMDE2.tif", r: 204.5 },
  { i: "db", t: "Girona.gpkg", r: 202, e: "c" },
  { i: "vector", t: "Limit_Girona.geojson", r: 249 },
  { i: "vector", t: "LLambilles.gpx", r: 216 },
  { i: "table", t: "llistat_farmacies.csv", r: 241.5 },
  { i: "table", t: "llistat_farmacies.ods", r: 243 },
  { i: "vector", t: "llistat_farmacies.shp", r: 243 },
  { i: "vector", t: "Localitzacions.shp", r: 233 },
  { i: "raster", t: "met15v20as0f0334Am1r100ca5.xml", r: 321 },
  { i: "vector", t: "met15v20as0f0334Am1r100ca5.xml", r: 321 },
  { i: "raster", t: "met15v20as0f0334Amr1r100.txt", r: 301.5 },
  { i: "vector", t: "met15v20as0f0334Amr1r100.txt", r: 301.5 },
  { i: "zip", t: "met5v10as0f0296Am1r100.zip", r: 292, e: "c" },
  { i: "zip", t: "met5v10as0f0334Am1r080.zip", r: 292, e: "c" },
  { i: "table", t: "notfound.csv", r: 207.5 },
  { i: "db", t: "prov.sqlite", r: 192, e: "c" },
  { i: "vector", t: "Ruta_Els_Angels.geojson", r: 266, sel: true },
  { i: "vector", t: "track_Els_Angels.geojson", r: 268 },
  { i: "vector", t: "tt.shp", r: 167 },
  { i: "folder", t: "Ferran", r: 150, d: 0, e: "c" },
  { i: "folder", t: "Figueres", r: 161, d: 0, e: "c" },
  { i: "folder", t: "grassdata", r: 167, d: 0, e: "c" },
];

/* ---------- menu: label, mnemonic index, text width, slot width ---------- */

const menu: [string, number, number, number][] = [
  ["Project", 3, 37, 51],
  ["Edit", 0, 20, 34],
  ["View", 0, 25, 39],
  ["Layer", 0, 28, 42],
  ["Settings", 0, 42, 56],
  ["Plugins", 0, 39, 53],
  ["Vector", 4, 33, 47],
  ["Raster", 0, 32, 46],
  ["Database", 0, 48, 62],
  ["Web", 0, 24, 38],
  ["Mesh", 0, 29, 43],
  ["MMQGIS", -1, 49, 62],
  ["SCP", -1, 21, 35],
  ["Processing", 3, 57, 71],
  ["Help", 0, 25, 39],
  ["Ráster", 0, 32, 46],
  ["Vectorial", 5, 45, 60],
];

/* ---------- map ---------- */

type Region = { c: string; p: string; x?: number; y?: number };
const regions: Region[] = [
  { c: "#2ee2f0", p: "412,0 412,38 400,55 403,70 395,85 380,82 375,100 355,103 340,128 363,140 358,175 366,182 349,190 348,228 370,265 400,305 418,333 440,350 480,370 600,370 720,330 740,300 790,250 840,160 840,128 790,110 780,0" },
  { c: "#3ada47", p: "418,0 422,20 430,28 455,33 465,42 530,47 545,43 570,60 610,63 640,58 660,53 668,75 676,72 678,50 669,42 684,30 686,0" },
  { c: "#4b6bdc", x: 600, p: "240,0 240,80 213,95 210,118 217,128 210,152 220,170 228,200 240,230 300,330 400,330 420,222 445,195 490,130 520,80 520,0" },
  { c: "#dc5d5c", x: 600, p: "163,0 165,22 172,28 170,50 178,62 173,80 187,92 187,110 178,132 188,128 196,115 213,92 248,88 246,60 250,0" },
  { c: "#76e51a", x: 600, p: "458,0 460,35 465,45 450,52 448,62 460,70 455,80 440,72 433,85 442,95 450,90 448,108 435,120 460,200 670,200 670,0" },
  { c: "#4b6bdc", x: 600, p: "450,95 460,93 465,80 477,95 470,112 448,108" },
  { c: "#5de6cd", x: 600, p: "520,405 560,428 670,430 670,718 610,718 540,718 530,560 530,500" },
  { c: "#4db4d6", x: 600, p: "565,400 590,350 670,350 670,562 645,568 635,550 618,535 603,525 618,500 605,480 605,460 585,445 565,438" },
  { c: "#5ce81c", x: 600, p: "435,120 443,140 455,145 480,155 500,168 520,158 560,175 565,165 582,168 587,148 610,125 625,122 638,158 642,140 670,130 670,385 620,388 600,378 585,385 580,415 565,418 565,438 530,430 515,450 400,400 393,340 370,335 400,322 393,295 395,250 410,245 417,200 405,188 385,190 384,180 405,185 430,150" },
  { c: "#40e8e0", x: 600, p: "670,266 645,275 598,284 606,306 640,302 670,308" },
  { c: "#40e8e0", x: 600, p: "670,208 652,213 638,222 652,233 670,235" },
  { c: "#4b6bdc", x: 600, p: "468,178 480,179 475,188" },
  { c: "#7d66cf", x: 600, p: "-20,470 85,480 100,440 240,430 320,430 340,475 350,600 285,640 240,680 130,720 40,720 -20,690 -60,680 -65,600 0,570 20,550" },
  { c: "#d4a531", x: 600, p: "210,150 220,175 228,178 236,165 245,168 258,148 275,160 285,158 293,175 303,183 318,180 322,172 336,170 336,205 325,215 322,225 340,240 318,275 310,420 298,440 268,442 265,440 268,462 240,455 150,452 110,450 100,420 105,330 100,300 128,265 155,240 165,240 203,180" },
  { c: "#9b50c8", x: 600, p: "310,550 370,540 400,490 445,490 500,540 550,520 568,535 582,575 568,605 582,640 555,672 575,720 420,770 340,770 310,660" },
  { c: "#2b20d5", x: 600, p: "288,256 316,258 318,275 328,280 332,265 345,275 358,297 370,285 390,280 395,310 400,325 370,332 380,342 405,348 418,365 420,385 435,385 445,410 465,410 485,390 515,388 518,425 530,430 525,460 555,505 535,525 500,560 460,537 445,510 405,505 380,528 390,555 370,555 330,573 312,560 318,525 290,508 268,498 268,485 298,470 298,455 280,448 268,442 270,425 248,412 265,400 300,392 285,370 278,350 262,335 282,310 278,285" },
  { c: "#cb5fee", x: 600, p: "316,532 316,560 320,575 318,612 345,610 352,622 350,720 290,780 200,780 120,760 90,740 30,720 37,660 55,662 88,675 130,662 150,645 155,620 175,595 210,562 218,572 240,562 245,572 265,558 285,560 300,552" },
  { c: "#e83cc8", p: "332,200 345,202 350,232 418,333 440,325 452,325 480,345 480,480 400,570 360,700 238,700 208,685 200,650 188,640 203,620 172,585 192,555 188,510 222,505 255,462 248,410 197,410 200,385 183,350 215,295 228,298 232,278 275,270 285,240 305,225 325,225" },
  { c: "#ecbb80", x: 600, p: "-14,300 0,290 2,270 12,278 38,275 58,240 68,235 75,208 88,205 96,215 92,235 105,245 112,235 105,250 110,262 128,268 125,290 130,300 118,325 143,325 132,345 135,400 118,412 125,422 145,435 150,460 118,478 125,518 85,535 60,522 35,505 -30,495 -30,440 -20,400 -20,340 3,335 2,310" },
  { c: "#ecbb80", x: 600, p: "28,210 50,203 52,212 58,216 35,235" },
  { c: "#e42bab", p: "525,302 558,303 562,322 575,333 618,335 627,330 620,343 638,350 625,358 615,358 612,375 592,400 590,437 580,470 480,480 458,462 440,445 443,432 458,428 455,400 440,385 445,370 462,365 465,342 495,325 520,322" },
  { c: "#e83cc8", p: "465,425 475,410 495,405 485,425 470,433" },
  { c: "#e42bab", x: 600, p: "48,352 58,338 78,335 66,350" },
  { c: "#cf1a5e", p: "338,655 342,605 370,580 368,545 395,540 398,525 412,522 418,488 455,478 460,462 480,450 500,448 525,438 530,432 542,444 555,432 585,435 602,465 598,490 640,512 635,530 657,543 620,590 600,600 583,632 545,638 530,680 440,710 350,700" },
  { c: "#cf1b31", y: 630, p: "205,60 238,58 243,22 262,10 285,47 300,47 320,20 338,25 345,45 375,45 420,33 445,33 530,100 540,220 520,250 500,370 440,380 345,375 310,310 230,240 220,130 198,115" },
  { c: "#d86f5c", y: 630, p: "545,12 568,28 585,28 603,3 610,25 640,30 642,78 690,85 715,112 745,140 740,180 720,230 675,242 640,252 600,265 555,310 505,357 480,350 458,300 463,270 480,248 500,257 510,245 508,232 517,230 510,217 492,220 490,200 500,180 530,60" },
  { c: "#4497c9", y: 630, p: "448,20 495,15 498,2 508,-6 518,14 545,8 568,30 572,45 585,52 587,80 570,92 548,100 552,132 530,137 523,145 540,150 528,205 515,207 495,198 490,220 490,235 478,243 450,222 440,225 410,190 400,155 385,140 412,115 403,95 412,80 410,50 420,35" },
  { c: "#d14a6e", x: 600, y: 420, p: "115,322 150,330 158,345 170,342 180,320 200,315 220,330 235,303 265,315 290,340 320,345 330,365 300,375 260,403 190,410 150,430 125,450 112,467 100,455 70,450 62,430 66,420 78,422 80,408 88,405 108,420 110,405 120,400 98,372 105,360 118,345" },
  { c: "#d373df", x: 600, y: 420, p: "350,195 355,207 380,215 370,230 375,250 385,270 400,275 410,268 405,305 375,305 385,320 405,330 418,320 418,357 320,372 310,345 280,345 258,338 270,315 285,310 285,297 263,292 268,275 280,272 268,262 265,240 290,222 340,210" },
  { c: "#9bce18", x: 600, y: 420, p: "418,356 420,320 440,305 460,265 485,270 505,243 550,250 555,270 570,282 600,278 611,298 560,320 530,325 480,342 440,350" },
  { c: "#9fcb5c", y: 630, p: "310,280 325,320 333,345 345,355 385,348 440,358 503,355 470,400 430,435 425,450 400,467 415,495 440,503 455,492 465,510 490,532 510,535 510,555 460,580 130,520 120,478 100,475 135,440 160,330 250,290" },
  { c: "#9fcb5c", y: 630, p: "418,480 435,476 450,483 458,495 440,487" },
  { c: "#63d991", y: 630, p: "200,92 200,113 235,102 275,123 282,150 275,175 312,198 280,240 300,250 320,285 295,295 250,318 200,335 188,345 187,390 160,425 135,447 115,420 108,385 120,345 140,318 130,300 135,280 100,250 97,220 85,205 90,180 115,180 125,165 155,155 165,105 190,95" },
  { c: "#e22e90", y: 630, p: "90,482 122,478 130,490 148,508 160,500 195,497 210,513 225,517 290,515 313,510 320,538 345,548 380,538 430,550 460,562 490,545 513,541 505,565 480,582 430,608 380,610 330,622 290,665 272,700 240,690 225,680 228,655 205,630 160,625 120,600 120,575 133,555 100,540 93,518 60,520 52,508 80,500" },
  { c: "#e22e90", y: 630, p: "327,660 345,662 350,655 365,660 370,650 400,650 385,670 350,682 335,675" },
];

/* Breaks every long edge into short ones with a small repeatable offset. */
function rough(points: string, dx: number, dy: number): string {
  const pts = points.split(" ").map((q) => q.split(",").map(Number));
  const out: string[] = [];
  pts.forEach(([x0, y0], k) => {
    const [x1, y1] = pts[(k + 1) % pts.length];
    const len = Math.hypot(x1 - x0, y1 - y0);
    const n = Math.max(1, Math.round(len / 9));
    for (let s = 0; s < n; s++) {
      const f = s / n;
      const x = x0 + (x1 - x0) * f + dx;
      const y = y0 + (y1 - y0) * f + dy;
      const h = Math.sin(x * 12.9898 + y * 78.233) * 43758.5453;
      const o = s === 0 ? 0 : (h - Math.floor(h) - 0.5) * 4;
      out.push(`${(x - ((y1 - y0) / len) * o).toFixed(1)},${(y + ((x1 - x0) / len) * o).toFixed(1)}`);
    }
  });
  return out.join(" ");
}

const MapCanvas = () => (
  <svg width="858" height="816" viewBox="-1320 18 2574 2448">
    {regions.map((r, k) => (
      <polygon key={k} points={rough(r.p, r.x ?? 0, r.y ?? 0)} fill={r.c} stroke="#2b2b2b" strokeWidth="2.8" strokeLinejoin="round" />
    ))}
    <path d="M400 1280L430 1238" stroke="#4a3038" strokeWidth="3" />
    <path d="M731 868l18-12 10-4M738 862l10 2" stroke="#5a3038" strokeWidth="2.500" fill="none" />
  </svg>
);

/* ---------- toolbars ---------- */

const T = ({ n, off }: { n: string; off?: boolean }) => <Slot $off={off}>{icons[n]}</Slot>;
const Drop = ({ off }: { off?: boolean }) => (
  <DropSlot>
    <Arrow $off={off} />
  </DropSlot>
);

export default function App() {
  return (
    <Window>
      <GlobalStyle />
      <TitleBar>
        <Gap $w={1} />
        <svg width="17" height="17" viewBox="0 0 17 17" fill="none">
          <circle cx="7.800" cy="7.800" r="5.900" stroke="#6aa73c" strokeWidth="3" />
          <path d="M8 8l7 7" stroke="#f0e64a" strokeWidth="3.500" />
          <path d="M10 10l6 6" stroke="#4f9230" strokeWidth="3" />
          <path d="M7 6.500l4 .5-3.500 4z" fill="#ee7913" />
        </svg>
        <TitleText><Fit w={134}>*Explorar_projecte - QGIS</Fit></TitleText>
        <svg width="120" height="17" viewBox="0 0 120 17" fill="none" stroke="#111">
          <path d="M0 7.500h10M45.500 4.500h7v7h-7zM48 4V2.500h7v7h-2M91 2l10 10M101 2L91 12" />
        </svg>
      </TitleBar>
      <MenuBar>
        {menu.map(([t, u, w, slot]) => (
          <MenuItem key={t} $w={slot}>
            <Fit w={w}>
              {u < 0 ? t : (<>{t.slice(0, u)}<Mnemonic>{t[u]}</Mnemonic>{t.slice(u + 1)}</>)}
            </Fit>
          </MenuItem>
        ))}
      </MenuBar>

      <ToolBar $h={39}>
        <Handle w={8} pad={3} />
        {["neu", "open", "save", "layout", "manager", "style"].map((n) => <T key={n} n={n} />)}
        <Handle w={16.5} />
        <Slot><Pressed>{Hand}</Pressed></Slot>
        {["pan", "zin", "zout", "zfull", "zsel", "zlay"].map((n) => <T key={n} n={n} />)}
        <T n="znat" off />
        <T n="zlast" />
        <T n="znext" off />
        {["map3", "bmNew", "bm", "refresh"].map((n) => <T key={n} n={n} />)}
        <Handle />
        <T n="identify" />
        <T n="action" off />
        <Drop off />
        <T n="select" />
        <Drop />
        <T n="form" />
        <Drop />
        {["desel", "table", "abacus", "gear", "sigma", "ruler"].map((n) => <T key={n} n={n} />)}
        <Drop />
        <T n="tip" />
        <T n="text" />
        <Drop />
      </ToolBar>

      <ToolBar $h={39}>
        <Handle w={8} pad={3} />
        {["layers", "gpkg", "vnew", "fnew", "chip"].map((n) => <T key={n} n={n} />)}
        <Rule $w={8} />
        <T n="vbox" />
        <Handle />
        <T n="pencils" off />
        <T n="pencil" />
        {["savee", "points", "vertex"].map((n) => <T key={n} n={n} off />)}
        <Drop off />
        {["multi", "trash", "cut", "copy", "paste", "undo", "redo"].map((n) => <T key={n} n={n} off />)}
        <Handle w={15} />
        <T n="abcY" />
        <T n="diagram" />
        <Rule $w={8} />
        <T n="abPin" />
        <T n="abcR" />
        <Rule $w={7} />
        {["lPin", "lEye", "lMove", "lRot", "lEdit"].map((n) => <T key={n} n={n} off />)}
        <Handle />
        <T n="help" />
        <Handle />
        <T n="sat" />
      </ToolBar>

      <ToolBar $h={16}>
        <Handle w={6} pad={1} h={13} />
      </ToolBar>

      <Body>
        <SideBar>
          <SideHandle><Dots $w={16} $h={4} /></SideHandle>
          {sideIcons.map((ic, k) => (
            <SideRow key={k} $x={k > 10 ? 13 : 7}>
              {ic}
              {[6, 7, 9, 10].includes(k) && <SideArrow />}
            </SideRow>
          ))}
        </SideBar>

        <Dock>
          <DockTitle>
            <Fit w={42}>Browser</Fit>
            <DockButtons>
              <svg width="12" height="12" fill="none" stroke="#666"><rect x=".5" y=".5" width="10.500" height="10.500" rx="2" /><rect x="2.500" y="5" width="4" height="4" /><path d="M5 4.500V2.500h4v4.500H7.500" /></svg>
              <svg width="12" height="12" fill="none" stroke="#666"><rect x=".5" y=".5" width="10.500" height="10.500" rx="2" /><path d="M3 3l5.500 5.500M8.500 3L3 8.500" strokeWidth="2" /></svg>
            </DockButtons>
          </DockTitle>
          <DockTools>
            <Svg s={16} box={16}><rect x="1.500" y="1.500" width="11" height="11" fill="#f4f4f4" stroke="#888" /><rect x="10" y="10" width="6" height="6" rx="1" fill="#4f9357" /><path d="M13 11v4M11 13h4" stroke="#fff" /></Svg>
            <Svg s={16}><Refresh /></Svg>
            <Svg s={16} box={16}><ellipse cx="8" cy="2.500" rx="7" ry="1.800" fill="#f3dc5a" stroke="#5b7ea8" /><path d="M1 3.500l5 6V15.500l4-2v-4l5-6c-3 2-11 2-14 0z" fill="#6f9bcb" stroke="#4a719f" /></Svg>
            <Svg s={16} box={16}><path d="M1.500 1v13M1.500 2.500h4M4 8h4M4 13h4M4 4v9" stroke="#888" /><rect x="5" y="6" width="3.500" height="3.500" fill="#f1b42e" /><rect x="5" y="11" width="3.500" height="3.500" fill="#f1b42e" /><path d="M11 1l4.500 5H12.500v8h-3V6H6.500z" fill="#4f7fb5" stroke="#2f5885" /></Svg>
            <Svg s={16} box={21}><Info /></Svg>
          </DockTools>
          <TreeBox>
            <Tree>
              {rows.map((r, k) => {
                const d = r.d ?? 1;
                return (
                  <TreeRow key={k} $depth={d}>
                    <Expander>
                      {r.e === "c" && <svg width="6" height="8"><path d="M1 0v8L5 4z" fill="#555" /></svg>}
                      {r.e === "o" && <Arrow />}
                    </Expander>
                    <TreeIcon>{treeIcons[r.i]}</TreeIcon>
                    <TreeLabel $sel={r.sel}>
                      <Fit w={r.r - (117 + d * 20)}>{r.t}</Fit>
                    </TreeLabel>
                  </TreeRow>
                );
              })}
            </Tree>
            <ScrollBar>
              <ScrollButton><UpArrow /></ScrollButton>
              <Trough $h={140} />
              <Thumb />
              <Trough $end $h={343} />
              <ScrollButton><Arrow /></ScrollButton>
            </ScrollBar>
          </TreeBox>
          <Tabs>
            <Tab $w={64} $on><Fit w={40}>Browser</Fit></Tab>
            <Tab $w={57}><Fit w={33}>Layers</Fit></Tab>
          </Tabs>
        </Dock>

        <Splitter><Dots $w={1} $h={17} /></Splitter>
        <MapPane><MapCanvas /></MapPane>
      </Body>

      <StatusBar>
        <Field $w={200} $pl={7}>
          <svg width="14" height="14" fill="none" stroke="#888" strokeWidth="1.300"><circle cx="5.500" cy="5.500" r="4.300" /><path d="M8.700 8.700l4 4" strokeWidth="2" /></svg>
          <Hint><Fit w={112}>Type to locate (Ctrl+K)</Fit></Hint>
        </Field>
        <Gap $w={270} />
        <Fit w={53}>Coordinate</Fit>
        <Gap $w={4} />
        <Field $w={98} $pl={8}><Fit w={77}>83992,4398755</Fit></Field>
        <Gap $w={4} />
        <svg width="17" height="17" fill="none"><path d="M1 4c1-3 4-3 6 0l5 5-4 5-5-5C1 8 0 6 1 4z" fill="#333" /><path d="M3 3l5 6M6 2l4 6M2 6l4 5" stroke="#ddd" /><circle cx="10" cy="11.500" r="4" fill="#ddd" stroke="#333" /><circle cx="10" cy="11.500" r="1.500" fill="#333" /><path d="M9 4l6-3M11 6l4-1" stroke="#333" strokeDasharray="1.500 1" /></svg>
        <Gap $w={11} />
        <Fit w={26}>Scale</Fit>
        <Gap $w={3} />
        <Field $w={81} $pl={3}><Fit w={52}>1:1475028</Fit><FieldButton $w={20}><Arrow /></FieldButton></Field>
        <Gap $w={11} />
        <svg width="14" height="16" fill="none"><path d="M3.500 8V4.500c0-4.500 6.500-4.500 6.500 0V8" stroke="#999" strokeWidth="1.600" /><rect x="1" y="7.500" width="11.500" height="7.500" rx="1" fill="#555" /></svg>
        <Gap $w={7} />
        <Fit w={45}>Magnifier</Fit>
        <Gap $w={3} />
        <Field $w={88}><Fit w={29}>100%</Fit><FieldButton $w={14}><UpArrow /><Arrow /></FieldButton></Field>
        <Gap $w={8} />
        <Fit w={42}>Rotation</Fit>
        <Gap $w={9} />
        <Field $w={84}><Fit w={25}>0,0 °</Fit><FieldButton $w={14}><UpArrow /><Arrow /></FieldButton></Field>
        <Gap $w={7} />
        <Check><svg width="11" height="11" fill="none"><path d="M2 5.500l2.500 3.500L9 1.500" stroke="#111" strokeWidth="1.800" /></svg></Check>
        <Gap $w={4} />
        <Fit w={35}>Render</Fit>
        <Gap $w={18} />
        <svg width="16" height="15" fill="none" stroke="#777"><path d="M1 8l3-5 4-2 4 2 3 5-3 3-4 3-4-3z" fill="#bbb" /><path d="M1 8h14M8 1v13M3 4.500h10M4 3c-1 4 0 7 4 11M12 3c1 4 0 7-4 11M3 11h10" /></svg>
        <Gap $w={3} />
        <Fit w={60}>EPSG:25831</Fit>
        <Gap $w={18} />
        <svg width="17" height="16"><path d="M8.500 1c10 0 10 11 2 11l3 3.500-6.500-3.500C-2 11.500-1 1 8.500 1z" fill="#555" /><g fill="#fff"><circle cx="5" cy="6.500" r="1.100" /><circle cx="8.500" cy="6.500" r="1.100" /><circle cx="12" cy="6.500" r="1.100" /></g></svg>
      </StatusBar>
      <Taskbar />

      <Pointer>
        <svg width="16" height="22" fill="none"><path d="M1 0v16l4-4h8.500z" fill="#fff" /><path d="M2 1l11 11" stroke="#222" strokeDasharray="3 1" /><path d="M4 17l3-3 2 3M8 13h4" stroke="#222" strokeDasharray="1.500 1.500" /></svg>
      </Pointer>
    </Window>
  );
}
